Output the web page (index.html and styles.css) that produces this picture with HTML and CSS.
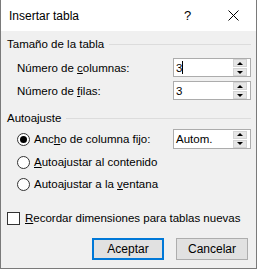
FILE: index.html
```html
<!DOCTYPE html>
<html lang="es">
<head>
    <meta charset="UTF-8">
    <title>Insertar tabla</title>
    <link rel="stylesheet" href="styles.css">
</head>
<body>
    <div class="dialog">
        <div class="titlebar">
            <span class="title">Insertar tabla</span>
            <span class="help">?</span>
            <svg class="close" width="11" height="11" viewBox="0 0 11 11">
                <path d="M0.5 0.5 L10.5 10.5 M10.5 0.5 L0.5 10.5" stroke="#000" stroke-width="1" fill="none"/>
            </svg>
        </div>
        <div class="content">
            <div class="group-title"><span>Tamaño de la tabla</span><span class="rule"></span></div>
            <div class="row">
                <span class="label">Número de <u>c</u>olumnas:</span>
                <div class="spin">
                    <span class="value">3<span class="caret"></span></span>
                    <div class="arrows"><span class="up"></span><span class="down"></span></div>
                </div>
            </div>
            <div class="row">
                <span class="label">Número de <u>f</u>ilas:</span>
                <div class="spin">
                    <span class="value">3</span>
                    <div class="arrows"><span class="up"></span><span class="down"></span></div>
                </div>
            </div>

            <div class="group-title second"><span>Autoajuste</span><span class="rule"></span></div>
            <div class="row radio-row first">
                <span class="radio checked"></span>
                <span class="label">Anc<u>h</u>o de columna fijo:</span>
                <div class="spin">
                    <span class="value">Autom.</span>
                    <div class="arrows"><span class="up"></span><span class="down"></span></div>
                </div>
            </div>
            <div class="row radio-row">
                <span class="radio"></span>
                <span class="label"><u>A</u>utoajustar al contenido</span>
            </div>
            <div class="row radio-row">
                <span class="radio"></span>
                <span class="label">Autoajustar a la <u>v</u>entana</span>
            </div>

            <div class="check-row">
                <span class="checkbox"></span>
                <span class="label"><u>R</u>ecordar dimensiones para tablas nuevas</span>
            </div>

            <div class="buttons">
                <button class="btn default">Aceptar</button>
                <button class="btn">Cancelar</button>
            </div>
        </div>
    </div>
</body>
</html>
```

FILE: styles.css
```css
* {
    box-sizing: border-box;
}
body {
    margin: 0;
    font-family: "Liberation Sans", Arial, sans-serif;
    font-size: 11.5px;
    color: #000;
}
.dialog {
    width: 257px;
    height: 269px;
    border: 1px solid #7a7a7a;
    border-top: none;
    display: flex;
    flex-direction: column;
    background-color: #f0f0f0;
}
.titlebar {
    height: 31px;
    background-color: #fff;
    display: flex;
    align-items: center;
    padding-left: 8px;
}
.title {
    flex: 1;
    font-size: 12px;
}
.help {
    width: 12px;
    margin-right: 32px;
    font-size: 13px;
}
.close {
    margin-right: 17px;
}
.content {
    padding: 6px 5px 0 6px;
    flex: 1;
}
.label {
    white-space: nowrap;
}
.group-title {
    display: flex;
    align-items: center;
    height: 14px;
    gap: 5px;
}
.group-title .rule {
    flex: 1;
    height: 1px;
    background-color: #dcdcdc;
}
.group-title.second {
    margin-top: 11px;
}
.row {
    display: flex;
    align-items: center;
    justify-content: space-between;
    padding-left: 10px;
    height: 19px;
    margin-top: 4px;
}
.row:nth-child(2) {
    margin-top: 7px;
}
.spin {
    width: 78px;
    height: 19px;
    border: 1px solid #acacac;
    background-color: #fff;
    display: flex;
    align-items: center;
    padding-left: 2px;
}
.spin .value {
    flex: 1;
    display: flex;
    align-items: center;
}
.caret {
    display: inline-block;
    width: 1px;
    height: 13px;
    background-color: #000;
}
.arrows {
    width: 14px;
    height: 17px;
    display: flex;
    flex-direction: column;
    margin-right: 3px;
    gap: 1px;
}
.arrows span {
    flex: 1;
    background-color: #e6e6e6;
    border: 1px solid #d4d4d4;
    display: flex;
    justify-content: center;
    align-items: center;
}
.arrows .up::after {
    content: "";
    border-left: 3px solid transparent;
    border-right: 3px solid transparent;
    border-bottom: 3px solid #000;
}
.arrows .down::after {
    content: "";
    border-left: 3px solid transparent;
    border-right: 3px solid transparent;
    border-top: 3px solid #000;
}
.radio-row {
    justify-content: flex-start;
    height: 20px;
    margin-top: 2px;
}
.radio-row.first {
    margin-top: 4px;
}
.radio-row.first + .radio-row {
    margin-top: 3px;
}
.radio-row .spin {
    margin-left: auto;
    height: 20px;
}
.radio {
    width: 13px;
    height: 13px;
    border: 1px solid #333;
    border-radius: 50%;
    background-color: #fff;
    margin-right: 4px;
    display: flex;
    justify-content: center;
    align-items: center;
}
.radio.checked::after {
    content: "";
    width: 7px;
    height: 7px;
    border-radius: 50%;
    background-color: #000;
}
.check-row {
    display: flex;
    align-items: center;
    height: 14px;
    margin-top: 17px;
}
.checkbox {
    width: 13px;
    height: 13px;
    border: 1px solid #333;
    background-color: #fff;
    margin-right: 5px;
}
.buttons {
    display: flex;
    justify-content: flex-end;
    gap: 12px;
    margin-top: 13px;
    padding-right: 3px;
}
.btn {
    width: 72px;
    height: 22px;
    font-family: inherit;
    font-size: 12px;
    color: #000;
    background-color: #e1e1e1;
    border: 1px solid #adadad;
    padding: 0;
}
.btn.default {
    border: 2px solid #0078d7;
}
```
